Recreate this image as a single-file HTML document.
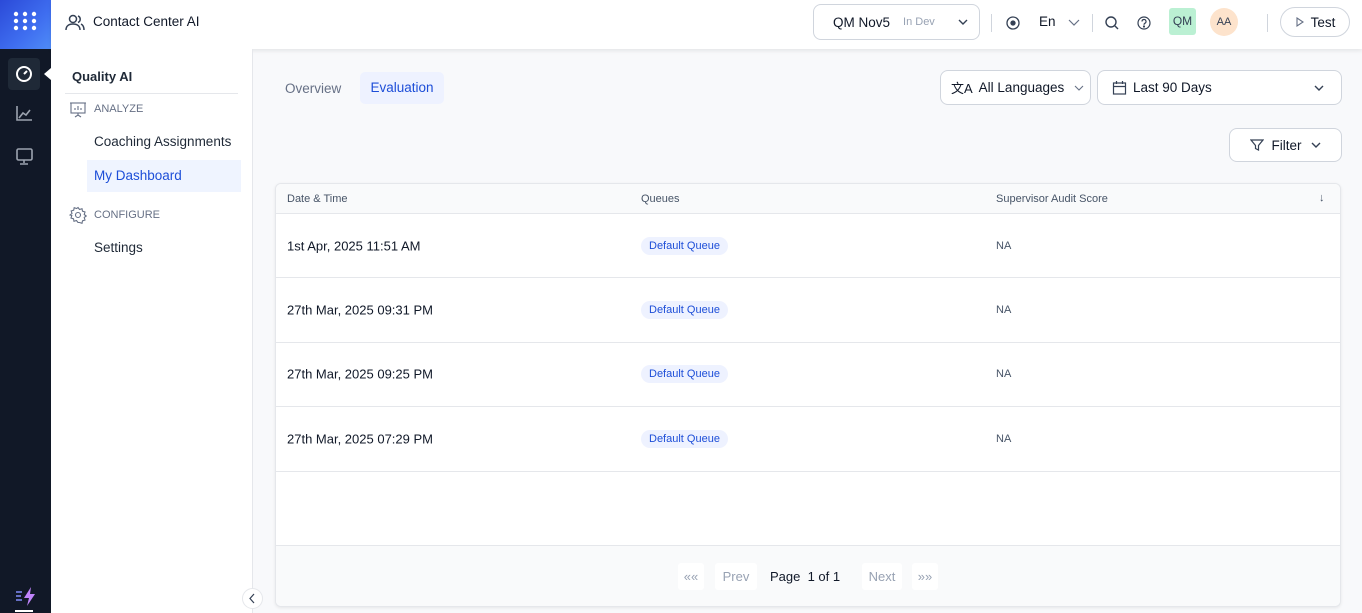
<!DOCTYPE html>
<html><head><style>
*{box-sizing:border-box;margin:0;padding:0}
body{width:1362px;height:613px;overflow:hidden;font-family:"Liberation Sans",sans-serif;background:#f8f9fb;position:relative;color:#101828}
.abs{position:absolute}
.rail{left:0;top:0;width:51px;height:613px;background:#111827}
.logo{left:0;top:0;width:51px;height:49px;background:linear-gradient(135deg,#2b4ad8,#3f6ef0 60%,#4f8cf7)}
.top{left:51px;top:0;width:1311px;height:49px;background:#fff;box-shadow:0 2px 4px rgba(0,0,0,.08)}
.side{left:51px;top:49px;width:202px;height:564px;background:#fff;border-right:1px solid #e5e7eb}
.btn{background:#fff;border:1px solid #d0d5dd;border-radius:8px;font-size:13.5px;display:flex;align-items:center}
.card{left:275px;top:183px;width:1066px;height:424px;background:#fff;border:1px solid #e5e7eb;border-radius:6px;overflow:hidden;box-shadow:0 1px 3px rgba(0,0,0,.08)}
.th{height:30px;background:#f9fafb;border-bottom:1px solid #e5e7eb;font-size:11px;color:#475467}
.row{height:64.4px;border-bottom:1px solid #e5e7eb;position:relative}
.row span{position:absolute;top:50%;transform:translateY(-50%)}
.d{left:11px;font-size:13px;color:#101828}
.q{left:365px;font-size:11px;color:#1d4ed8;background:#eef2ff;border-radius:10px;padding:3px 8px}
.na{left:720px;font-size:11px;color:#475467}
.foot{left:0;top:361px;width:100%;height:63px;background:#f9fafb;border-top:1px solid #e5e7eb}
.pg{position:absolute;top:17px;height:27px;font-size:13px;line-height:27px;color:#98a2b3;background:#fff;border-radius:3px;text-align:center}
</style></head><body>
<div class="abs rail"></div>
<div class="abs logo"><svg width="51" height="49"><g fill="#fff">
<circle cx="16" cy="14" r="2.2"/><circle cx="25" cy="14" r="2.2"/><circle cx="34" cy="14" r="2.2"/>
<circle cx="16" cy="21" r="2.2"/><circle cx="25" cy="21" r="2.2"/><circle cx="34" cy="21" r="2.2"/>
<circle cx="16" cy="28" r="2.2"/><circle cx="25" cy="28" r="2.2"/><circle cx="34" cy="28" r="2.2"/></g></svg></div>
<div class="abs" style="left:8px;top:58px;width:32px;height:32px;background:#1f2937;border-radius:4px"></div>
<svg class="abs" style="left:0;top:58px" width="55" height="140" fill="none" stroke="#e5e7eb" stroke-width="1.6">
<circle cx="24" cy="16" r="7" stroke="#fff" stroke-width="2"/><path d="M24 16l3-3" stroke="#fff" stroke-width="2"/>
<path d="M44 16l7-6v12z" fill="#fff" stroke="none"/>
<path d="M17 48v14h15M19 60l4-5 3 2 4-5" stroke="#9ca3af"/>
<rect x="17" y="91" width="15" height="11" rx="1.5" stroke="#9ca3af"/><path d="M24 102v3M20 106h8" stroke="#9ca3af"/>
</svg>
<svg class="abs" style="left:14px;top:585px" width="24" height="28"><path d="M2 7h6M2 11h5M2 15h6" stroke="#818cf8" stroke-width="1.5"/><path d="M17 2l-7 11h5l-2 8 8-12h-5z" fill="#c084fc"/><rect x="1" y="25" width="18" height="2" fill="#fff"/></svg>
<div class="abs top"></div>
<svg class="abs" style="left:64px;top:12px" width="22" height="22" fill="none" stroke="#344054" stroke-width="1.5"><circle cx="9" cy="7" r="3.5"/><path d="M2 18c0-4 3-6 7-6s7 2 7 6"/><path d="M14 4a3.5 3.5 0 010 6.5M17 12c2 1 3 3 3 6"/></svg>
<div class="abs" style="left:93px;top:14px;font-size:13.5px">Contact Center AI</div>
<div class="abs btn" style="left:813px;top:4px;width:167px;height:36px;border-radius:8px"><span style="margin-left:19px">QM Nov5</span><span style="margin-left:13px;font-size:11px;color:#98a2b3">In Dev</span><svg style="margin-left:22px" width="12" height="10"><path d="M2 3l4 4 4-4" fill="none" stroke="#344054" stroke-width="1.4"/></svg></div>
<div class="abs" style="left:991px;top:14px;width:1px;height:18px;background:#d0d5dd"></div>
<svg class="abs" style="left:1005px;top:15px" width="16" height="16" fill="none" stroke="#344054" stroke-width="1.3"><circle cx="8" cy="8" r="6"/><circle cx="8" cy="8" r="2" fill="#344054"/></svg>
<div class="abs" style="left:1039px;top:14px;font-size:13.5px">En</div>
<svg class="abs" style="left:1068px;top:17px" width="12" height="10"><path d="M1 3l5 5 5-5" fill="none" stroke="#667085" stroke-width="1.2"/></svg>
<div class="abs" style="left:1092px;top:14px;width:1px;height:18px;background:#d0d5dd"></div>
<svg class="abs" style="left:1104px;top:15px" width="16" height="16" fill="none" stroke="#344054" stroke-width="1.4"><circle cx="7" cy="7" r="5"/><path d="M11 11l3 3"/></svg>
<svg class="abs" style="left:1136px;top:15px" width="16" height="16" fill="none" stroke="#344054" stroke-width="1.2"><circle cx="8" cy="8" r="6"/><path d="M6 6.5a2 2 0 113 1.7c-.7.4-1 .8-1 1.5"/><circle cx="8" cy="11.5" r=".5"/></svg>
<div class="abs" style="left:1169px;top:8px;width:27px;height:27px;background:#bbf0d3;border-radius:3px;font-size:12px;text-align:center;line-height:27px;color:#344054">QM</div>
<div class="abs" style="left:1210px;top:8px;width:28px;height:28px;background:#fde3cc;border-radius:50%;font-size:11px;text-align:center;line-height:28px;color:#344054">AA</div>
<div class="abs" style="left:1267px;top:14px;width:1px;height:18px;background:#d0d5dd"></div>
<div class="abs btn" style="left:1280px;top:7px;width:70px;height:30px;border-radius:16px;justify-content:center"><svg width="10" height="12" style="margin-right:6px"><path d="M2 2l6 4-6 4z" fill="none" stroke="#667085" stroke-width="1.1"/></svg>Test</div>
<div class="abs side"></div>
<div class="abs" style="left:72px;top:69px;font-size:13px;font-weight:bold;color:#1f2937">Quality AI</div>
<div class="abs" style="left:65px;top:93px;width:173px;height:1px;background:#e5e7eb"></div>
<svg class="abs" style="left:69px;top:101px" width="18" height="18" fill="none" stroke="#667085" stroke-width="1.1"><rect x="2" y="2" width="14" height="10"/><path d="M1 2h16M9 12v2M6 16l3-2 3 2M6 9V7M9 9V5M12 9V7"/></svg>
<div class="abs" style="left:94px;top:103px;font-size:11px;color:#667085">ANALYZE</div>
<div class="abs" style="left:94px;top:134px;font-size:13.5px;color:#1f2937">Coaching Assignments</div>
<div class="abs" style="left:87px;top:160px;width:154px;height:32px;background:#eff4ff"></div>
<div class="abs" style="left:94px;top:168px;font-size:13.5px;color:#1d4ed8">My Dashboard</div>
<svg class="abs" style="left:69px;top:206px" width="18" height="18" fill="none" stroke="#667085" stroke-width="1.1"><circle cx="9" cy="9" r="2.5"/><path d="M9 1.5l1.5 2 2.5-.8.5 2.5 2.5.8-.8 2.5 2 1.5-2 1.5.8 2.5-2.5.8-.5 2.5-2.5-.8L9 16.5l-1.5-2-2.5.8-.5-2.5-2.5-.8.8-2.5L1 9l2-1.5-.8-2.5 2.5-.8.5-2.5 2.5.8z"/></svg>
<div class="abs" style="left:94px;top:209px;font-size:11px;color:#667085">CONFIGURE</div>
<div class="abs" style="left:94px;top:240px;font-size:13.5px;color:#1f2937">Settings</div>
<div class="abs" style="left:242px;top:588px;width:21px;height:21px;border-radius:50%;background:#fff;border:1px solid #e5e7eb"><svg width="19" height="19"><path d="M11 5l-4 4.5 4 4.5" fill="none" stroke="#344054" stroke-width="1.2"/></svg></div>
<div class="abs" style="left:285px;top:81px;font-size:13.5px;color:#667085">Overview</div>
<div class="abs" style="left:360px;top:72px;width:84px;height:32px;background:#eef2ff;border-radius:5px;font-size:13.5px;color:#1d4ed8;text-align:center;line-height:32px">Evaluation</div>
<div class="abs btn" style="left:940px;top:70px;width:151px;height:35px"><span style="margin-left:10px;font-size:13px">文A</span><span style="margin-left:6px">All Languages</span><svg style="margin-left:10px" width="10" height="8"><path d="M1 2l4 4 4-4" fill="none" stroke="#667085" stroke-width="1.1"/></svg></div>
<div class="abs btn" style="left:1097px;top:70px;width:245px;height:35px"><svg style="margin-left:14px" width="15" height="15" fill="none" stroke="#344054" stroke-width="1.2"><rect x="1.5" y="3" width="12" height="11"/><path d="M4.5 1v3M10.5 1v3M1.5 6.5h12"/></svg><span style="margin-left:6px">Last 90 Days</span><svg style="margin-left:auto;margin-right:16px" width="12" height="10"><path d="M2 3l4 4 4-4" fill="none" stroke="#344054" stroke-width="1.4"/></svg></div>
<div class="abs btn" style="left:1229px;top:128px;width:113px;height:34px;justify-content:center"><svg width="14" height="14" fill="none" stroke="#344054" stroke-width="1.2"><path d="M1 2h12L8.5 7.5V12l-3-1.5v-3z"/></svg><span style="margin:0 8px">Filter</span><svg width="12" height="10"><path d="M2 3l4 4 4-4" fill="none" stroke="#344054" stroke-width="1.4"/></svg></div>
<div class="abs card">
<div class="th" style="position:relative"><span class="abs" style="left:11px;top:9px">Date &amp; Time</span><span class="abs" style="left:365px;top:9px">Queues</span><span class="abs" style="left:720px;top:9px">Supervisor Audit Score</span><span class="abs" style="left:1043px;top:8px">↓</span></div>
<div class="row"><span class="d">1st Apr, 2025 11:51 AM</span><span class="q">Default Queue</span><span class="na">NA</span></div>
<div class="row"><span class="d">27th Mar, 2025 09:31 PM</span><span class="q">Default Queue</span><span class="na">NA</span></div>
<div class="row"><span class="d">27th Mar, 2025 09:25 PM</span><span class="q">Default Queue</span><span class="na">NA</span></div>
<div class="row"><span class="d">27th Mar, 2025 07:29 PM</span><span class="q">Default Queue</span><span class="na">NA</span></div>
<div class="abs foot">
<div class="pg" style="left:402px;width:26px">««</div>
<div class="pg" style="left:439px;width:42px">Prev</div>
<div class="pg" style="left:494px;width:76px;background:none;color:#101828;text-align:left">Page &nbsp;1 of 1</div>
<div class="pg" style="left:586px;width:40px">Next</div>
<div class="pg" style="left:636px;width:26px">»»</div>
</div>
</div>
</body></html>
